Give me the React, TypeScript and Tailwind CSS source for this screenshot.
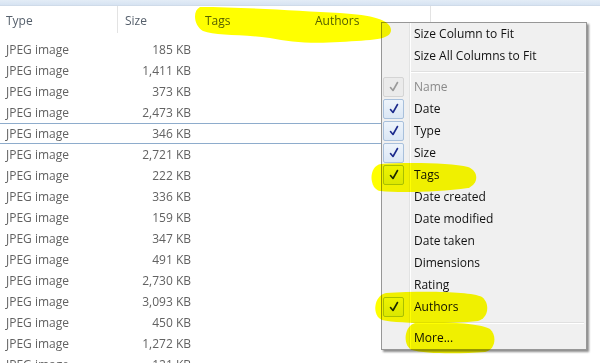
import React from "react";

const sizes = [
  "185 KB", "1,411 KB", "373 KB", "2,473 KB", "346 KB", "2,721 KB", "222 KB", "336 KB",
  "159 KB", "347 KB", "491 KB", "2,730 KB", "3,093 KB", "450 KB", "1,272 KB", "121 KB",
];

type Item =
  | { kind: "sep" }
  | { kind: "item"; label: string; check?: "on" | "dis"; dim?: boolean };

const items: Item[] = [
  { kind: "item", label: "Size Column to Fit" },
  { kind: "item", label: "Size All Columns to Fit" },
  { kind: "sep" },
  { kind: "item", label: "Name", check: "dis", dim: true },
  { kind: "item", label: "Date", check: "on" },
  { kind: "item", label: "Type", check: "on" },
  { kind: "item", label: "Size", check: "on" },
  { kind: "item", label: "Tags", check: "on" },
  { kind: "item", label: "Date created" },
  { kind: "item", label: "Date modified" },
  { kind: "item", label: "Date taken" },
  { kind: "item", label: "Dimensions" },
  { kind: "item", label: "Rating" },
  { kind: "item", label: "Authors", check: "on" },
  { kind: "sep" },
  { kind: "item", label: "More..." },
];

function Check({ color }: { color: string }) {
  return (
    <svg width="12" height="12" viewBox="0 0 12 12">
      <path d="M2.5 6.5 L5 9.5 L9.5 1.5" fill="none" stroke={color} strokeWidth="1.6" strokeLinejoin="round" strokeLinecap="round" />
    </svg>
  );
}

function Menu() {
  return (
    <div className="absolute left-[381px] top-[22px] w-[206px] h-[328px] bg-[#f0f0f0] border border-[#979797] shadow-[2px_2px_2px_rgba(0,0,0,0.45)] flex flex-col">
      {items.map((it, i) =>
        it.kind === "sep" ? (
          <div key={i} className="flex h-[9px]">
            <div className="w-[28px] border-r border-[#e2e3e3] shrink-0" />
            <div className="w-px bg-white" />
            <div className="flex-1 flex items-center mr-[2px]">
              <div className="w-full h-px bg-[#e0e0e0] shadow-[0_1px_0_#ffffff]" />
            </div>
          </div>
        ) : (
          <div key={i} className="flex h-[22px] items-center">
            <div className="w-[28px] h-full border-r border-[#e2e3e3] shrink-0 flex items-center pl-px">
              {it.check === "on" && (
                <div className="w-[21px] h-[20px] rounded-[2px] border border-[#a8c0dc] bg-gradient-to-b from-[#eef4fb] to-[#dbe7f5] flex items-center justify-center">
                  <Check color="#1c2a8c" />
                </div>
              )}
              {it.check === "dis" && (
                <div className="w-[21px] h-[20px] rounded-[2px] border border-[#d4d4d4] bg-[#ebebeb] flex items-center justify-center">
                  <Check color="#9a9a9a" />
                </div>
              )}
            </div>
            <div className="w-px h-full bg-white" />
            <div className={`pl-[3px] ${it.dim ? "text-[#8a8a8a]" : "text-[#111111]"}`}>{it.label}</div>
          </div>
        )
      )}
    </div>
  );
}

export default function App() {
  return (
    <div className="relative w-[600px] h-[363px] overflow-hidden bg-white font-['Open_Sans','Noto_Sans',sans-serif] text-[12px] leading-none">
      <div className="h-[6px] bg-gradient-to-b from-[#e3ecf6] to-[#d6e3f2] border-b border-[#cfdbe9]" />
      <div className="flex h-[27px] text-[#56606c]">
        <div className="w-[118px] pl-[6px] pt-[2px] border-r border-[#e3e3e3] flex items-center">Type</div>
        <div className="w-[80px] pl-[7px] pt-[2px] flex items-center">Size</div>
        <div className="w-[110px] pl-[7px] pt-[2px] flex items-center">Tags</div>
        <div className="w-[123px] pl-[7px] pt-[2px] border-r border-[#e3e3e3] flex items-center">Authors</div>
      </div>
      <div className="h-[6px]" />
      <div className="flex flex-col text-[#626262]">
        {sizes.map((s, i) => (
          <div
            key={i}
            className={`flex h-[21px] items-center w-[431px] ${i === 4 ? "border-y border-[#8eaccc]" : ""}`}
          >
            <div className="w-[118px] pl-[6px]">JPEG image</div>
            <div className="w-[73px] text-right">{s}</div>
          </div>
        ))}
      </div>
      <Menu />
      <svg className="absolute inset-0 mix-blend-multiply pointer-events-none" width="600" height="363" viewBox="0 0 600 363">
        <g fill="#ffff00">
          <path d="M200 7 C240 7 300 11 340 13 C372 15 391 20 391 30 C391 40 372 40 340 42 C310 44 290 42 270 38 C240 34 215 36 203 31 C194 26 192 11 200 7 Z" />
          <path d="M381 164 C410 162 452 163 468 167 C479 171 479 184 468 188 C440 192 400 193 380 191 C369 189 368 166 381 164 Z" />
          <path d="M386 293 C420 291 470 291 482 297 C490 303 489 318 478 321 C450 324 400 324 382 320 C372 316 373 296 386 293 Z" />
          <path d="M415 323 C440 321 480 323 490 329 C497 335 496 350 485 352 C460 354 425 354 412 350 C403 346 403 327 415 323 Z" />
        </g>
      </svg>
    </div>
  );
}
